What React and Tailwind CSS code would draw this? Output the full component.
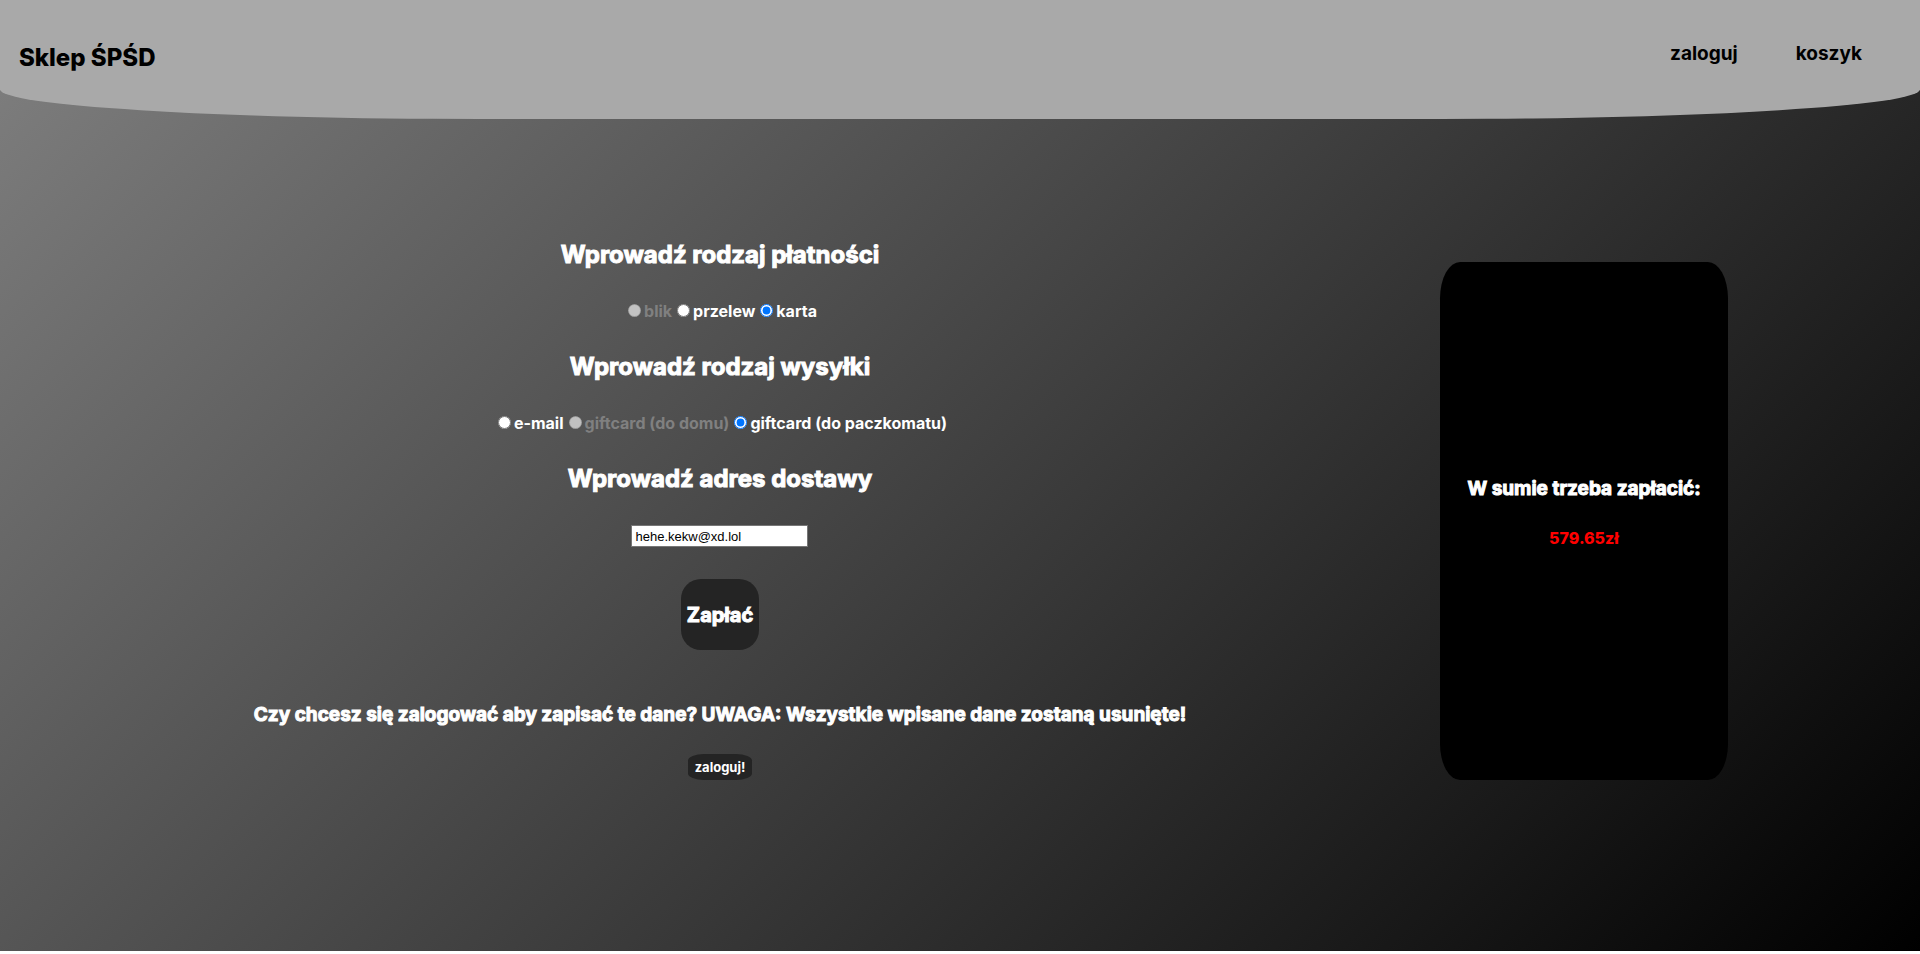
const heavy = "[-webkit-text-stroke:1px_currentColor]";

function Choice({ name, label, disabled, checked }) {
  return (
    <label className={disabled ? "flex items-center text-[#808080]" : "flex items-center text-white"}>
      <input
        type="radio"
        name={name}
        disabled={disabled}
        defaultChecked={checked}
        className="mr-[3px] mb-[2px] ml-[5px] h-[13px] w-[13px]"
      />
      {label}
    </label>
  );
}

function Question({ title, children }) {
  return (
    <section className="flex flex-col items-center gap-8">
      <h2 className={`text-2xl leading-[29px] ${heavy}`}>{title}</h2>
      {children}
    </section>
  );
}

export default function App() {
  return (
    <div className="bg-white font-[Inter,sans-serif] font-bold">
      <div className="min-h-[calc(100vh-3px)] bg-[linear-gradient(135deg,#808080,#000000)]">
        <header className="flex h-[119px] items-center justify-between rounded-b-[25%] bg-[#a9a9a9] pr-[58px] pb-1 pl-[19px] text-black">
          <h1 className="text-2xl leading-[29px] font-extrabold">Sklep ŚPŚD</h1>
          <nav className="flex gap-[58px] pb-2 text-[19px] leading-[22px]">
            <a href="#zaloguj">zaloguj</a>
            <a href="#koszyk">koszyk</a>
          </nav>
        </header>
        <main className="flex items-start pt-[121px] text-white">
          <form className="flex w-3/4 flex-col items-center text-base leading-5">
            <div className="flex flex-col items-center gap-[31px]">
              <Question title="Wprowadź rodzaj płatności">
                <div className="flex">
                  <Choice name="payment" label="blik" disabled />
                  <Choice name="payment" label="przelew" />
                  <Choice name="payment" label="karta" checked />
                </div>
              </Question>
              <Question title="Wprowadź rodzaj wysyłki">
                <div className="flex">
                  <Choice name="shipping" label="e-mail" />
                  <Choice name="shipping" label="giftcard (do domu)" disabled />
                  <Choice name="shipping" label="giftcard (do paczkomatu)" checked />
                </div>
              </Question>
              <Question title="Wprowadź adres dostawy">
                <input
                  type="email"
                  aria-label="Adres dostawy"
                  defaultValue="hehe.kekw@xd.lol"
                  className="h-[22px] w-[177px] border border-[#767676] bg-white px-[3px] font-['Liberation_Sans',sans-serif] text-[13px] font-normal text-black"
                />
              </Question>
            </div>
            <button type="submit" className={`mt-8 h-[71px] w-[78px] rounded-[20px] bg-[#242424] text-xl ${heavy}`}>
              Zapłać
            </button>
            <p className={`mt-[54px] text-[19px] leading-[22px] ${heavy}`}>
              Czy chcesz się zalogować aby zapisać te dane? UWAGA: Wszystkie wpisane dane zostaną usunięte!
            </p>
            <button type="button" className="mt-7 h-[26px] w-16 rounded-[25%] bg-[#242424] text-[13px]">
              zaloguj!
            </button>
          </form>
          <aside className="mt-[22px] flex h-[518px] w-[15%] flex-col items-center justify-center gap-7 rounded-[7%] bg-black pb-4 text-center">
            <h3 className={`text-[19px] leading-[22px] ${heavy}`}>W sumie trzeba zapłacić:</h3>
            <p className="text-base leading-5 font-extrabold text-[#ff0000]">579.65zł</p>
          </aside>
        </main>
      </div>
    </div>
  );
}
